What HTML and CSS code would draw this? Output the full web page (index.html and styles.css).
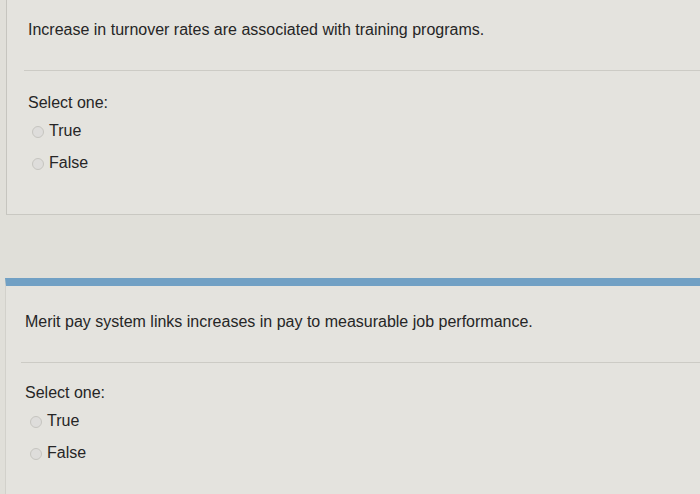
FILE: index.html
```html
<!DOCTYPE html>
<html lang="en">
<head>
<meta charset="utf-8">
<title>Quiz</title>
<link rel="stylesheet" href="styles.css">
</head>
<body>
<div class="quiz">
  <div class="que que-first">
    <div class="qtext">Increase in turnover rates are associated with training programs.</div>
    <div class="ablock">
      <div class="prompt">Select one:</div>
      <label class="option"><span class="radio"></span>True</label>
      <label class="option"><span class="radio"></span>False</label>
    </div>
  </div>

  <div class="que que-second">
    <div class="qtext">Merit pay system links increases in pay to measurable job performance.</div>
    <div class="ablock">
      <div class="prompt">Select one:</div>
      <label class="option"><span class="radio"></span>True</label>
      <label class="option"><span class="radio"></span>False</label>
    </div>
  </div>
</div>
</body>
</html>
```

FILE: styles.css
```css
html, body {
  margin: 0;
  padding: 0;
}

body {
  background: #e0dfd9;
  font-family: "Liberation Sans", Arial, Helvetica, sans-serif;
  font-size: 16px;
  line-height: 20px;
  color: #262626;
  overflow: hidden;
  height: 494px;
}

.quiz {
  display: flex;
  flex-direction: column;
  height: 100%;
}

.que {
  background: #e4e3de;
  border-left: 1px solid #c6c5bf;
}

.que-first {
  margin-left: 6px;
  padding: 20px 0 29px 21px;
  border-bottom: 1px solid #c9c8c2;
}

.que-second {
  flex: 1;
  margin-left: 5px;
  margin-top: 63px;
  padding: 26px 0 0 19px;
  border-top: 8px solid #71a0c4;
  border-left-color: #d2d1cb;
}

.qtext {
  margin-bottom: 30px;
}

.ablock {
  border-top: 1px solid #cccbc5;
  padding-top: 22px;
  margin-left: -4px;
  padding-left: 4px;
  display: flex;
  flex-direction: column;
  align-items: flex-start;
}

.que-second .ablock {
  padding-top: 20px;
}

.prompt {
  margin-bottom: 8px;
}

.option {
  display: flex;
  align-items: center;
  margin-left: 4px;
  margin-bottom: 12px;
}

.que-second .option {
  margin-left: 5px;
}

.radio {
  width: 10px;
  height: 10px;
  border-radius: 50%;
  background: #dedddb;
  border: 1px solid #c6c5c0;
  margin-right: 5px;
  margin-top: 1px;
  flex: none;
}
```
